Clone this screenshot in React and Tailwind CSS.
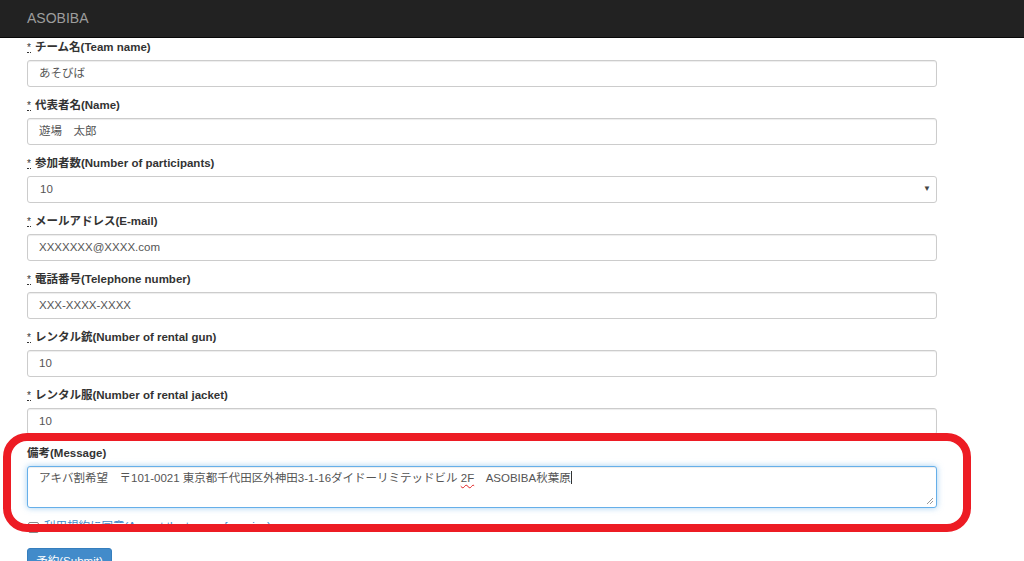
import React from "react";

const FONT = { fontFamily: '"Liberation Sans", "Noto Sans CJK JP", sans-serif' };

const FIELDS = [
  { label: "チーム名(Team name)", value: "あそびば" },
  { label: "代表者名(Name)", value: "遊場　太郎" },
  { label: "参加者数(Number of participants)", value: "10", select: true },
  { label: "メールアドレス(E-mail)", value: "XXXXXXX@XXXX.com" },
  { label: "電話番号(Telephone number)", value: "XXX-XXXX-XXXX" },
  { label: "レンタル銃(Number of rental gun)", value: "10" },
  { label: "レンタル服(Number of rental jacket)", value: "10" },
];

function Field({ label, value, select }) {
  return (
    <div className="mb-[11px]">
      <label className="flex items-baseline h-[15px] mb-[5px] text-[11.5px] leading-[15px] font-bold text-[#333]">
        <abbr className="text-[10px] font-normal no-underline border-b border-dotted border-[#333] leading-[9px] mr-[4px]">*</abbr>
        {label}
      </label>
      {select ? (
        <div className="relative">
          <div className="h-[27px] w-full border border-[#ccc] rounded-[3px] bg-white pl-[12px] text-[11.5px] leading-[25px] text-[#555]">
            {value}
          </div>
          <span className="absolute right-[6px] top-[9px] text-[8px] leading-[8px] text-[#444]">▼</span>
        </div>
      ) : (
        <div className="h-[27px] w-full border border-[#ccc] rounded-[3px] bg-white pl-[11px] text-[11.5px] leading-[25px] text-[#555] shadow-[inset_0_1px_1px_rgba(0,0,0,0.075)]">
          {value}
        </div>
      )}
    </div>
  );
}

export default function App() {
  return (
    <div className="relative w-[1024px] h-[561px] overflow-hidden bg-white" style={FONT}>
      <div className="h-[38px] bg-[#222] border-b border-[#080808] flex items-center px-[27px]">
        <span className="text-[14px] text-[#9d9d9d]">ASOBIBA</span>
      </div>

      <form className="w-[910px] ml-[27px] pt-[2px]">
        {FIELDS.map(f => (
          <Field key={f.label} {...f} />
        ))}

        <div className="mb-[11px]">
          <label className="block h-[15px] mb-[5px] text-[11.5px] leading-[15px] font-bold text-[#333]">
            備考(Message)
          </label>
          <div className="relative h-[42px] w-full border border-[#66afe9] rounded-[3px] bg-white pl-[11px] pt-[3px] text-[11.5px] leading-[16px] text-[#555] shadow-[inset_0_1px_1px_rgba(0,0,0,0.075),0_0_6px_rgba(102,175,233,0.6)]">
            {"アキバ割希望　〒101-0021 東京都千代田区外神田3-1-16ダイドーリミテッドビル "}
            <span className="underline decoration-wavy decoration-[#e02020] decoration-1 underline-offset-2">2F</span>
            {"　ASOBIBA秋葉原"}
            <span className="inline-block w-px h-[13px] bg-[#333] align-[-2px]" />
            <svg className="absolute right-[2px] bottom-[2px]" width="8" height="8" viewBox="0 0 8 8">
              <path d="M7 1 L1 7 M7 4 L4 7" stroke="#999" strokeWidth="1" />
            </svg>
          </div>
        </div>

        <div className="flex items-center h-[16px] mb-[13px] text-[11.5px]">
          <span className="w-[11px] h-[11px] border border-[#888] rounded-[2px] bg-white mr-[5px] ml-[1px]" />
          <a className="text-[#428bca]">利用規約に同意(Accept the terms of service)</a>
        </div>

        <button
          type="button"
          className="h-[27px] w-[85px] rounded-[3px] bg-[#428bca] border border-[#357ebd] text-white text-[11.5px]"
        >
          予約(Submit)
        </button>
      </form>

      <div className="absolute left-[3px] top-[433px] w-[968px] h-[99px] border-[8px] border-[#ed1c24] rounded-[24px] pointer-events-none" />
    </div>
  );
}
